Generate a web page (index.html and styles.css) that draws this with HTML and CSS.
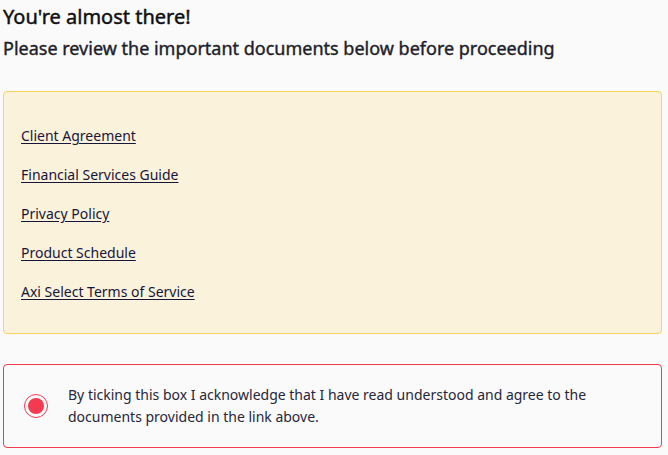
FILE: index.html
```html
<!DOCTYPE html>
<html lang="en">
<head>
  <meta charset="UTF-8">
  <meta name="viewport" content="width=device-width, initial-scale=1.0"/>
  <title>Review documents</title>
  <link rel="stylesheet" href="styles.css">
</head>
<body>
  <div class="page">
    <h1 class="title">You're almost there!</h1>
    <h2 class="subtitle">Please review the important documents below before proceeding</h2>

    <!-- documents -->
    <div class="docs">
      <a href="#">Client Agreement</a>
      <a href="#">Financial Services Guide</a>
      <a href="#">Privacy Policy</a>
      <a href="#">Product Schedule</a>
      <a href="#">Axi Select Terms of Service</a>
    </div>

    <!-- acknowledgement -->
    <label class="ack">
      <span class="radio"><span class="radio-dot"></span></span>
      <span class="ack-text">By ticking this box I acknowledge that I have read understood and agree to the documents provided in the link above.</span>
    </label>
  </div>
</body>
</html>
```

FILE: styles.css
```css
body {
  margin: 0;
  background-color: #fafafa;
  font-family: 'Noto Sans', 'Open Sans', sans-serif;
  color: #1b1b30;
}

.page {
  padding: 3px 6px 0 3px;
}

.title {
  font-size: 20px;
  font-weight: 400;
  -webkit-text-stroke: 0.45px #0f0f14;
  line-height: 27px;
  margin: 0;
  color: #0f0f14;
}

.subtitle {
  font-size: 18px;
  font-weight: 400;
  -webkit-text-stroke: 0.4px #1e1e2a;
  line-height: 25px;
  margin: 6px 0 0 0;
  color: #1e1e2a;
}

.docs {
  margin-top: 30px;
  background-color: #fbf2dc;
  border: 1px solid #fcd35a;
  border-radius: 4px;
  padding: 33px 17px 31px;
  display: flex;
  flex-direction: column;
  align-items: flex-start;
  gap: 18px;
}

.docs a {
  font-size: 14px;
  line-height: 21px;
  color: #16163a;
  text-decoration: underline;
  text-underline-offset: 2px;
}

.ack {
  margin-top: 30px;
  border: 1px solid #f43a50;
  border-radius: 4px;
  padding: 19px 20px 19px 20px;
  display: flex;
  align-items: center;
  gap: 20px;
  cursor: pointer;
}

.radio {
  flex: none;
  width: 24px;
  height: 24px;
  box-sizing: border-box;
  border: 1.5px solid #f43a50;
  border-radius: 50%;
  display: flex;
  align-items: center;
  justify-content: center;
}

.radio-dot {
  width: 16px;
  height: 16px;
  border-radius: 50%;
  background-color: #f43a50;
}

.ack-text {
  font-size: 14px;
  line-height: 22px;
  color: #26263a;
  padding-right: 30px;
}
```
